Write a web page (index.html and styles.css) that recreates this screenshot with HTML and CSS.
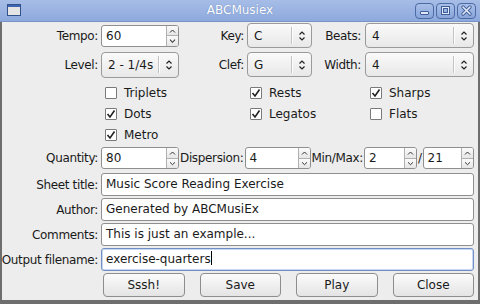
FILE: index.html
```html
<!DOCTYPE html>
<html lang="en">
<head>
  <meta charset="UTF-8" />
  <title>ABCMusiex</title>
  <link rel="stylesheet" href="styles.css">
</head>
<body>
  <div class="window">

    <!-- Title bar -->
    <div class="titlebar">
      <svg class="app-icon" width="14" height="12" viewBox="0 0 14 12">
        <rect x="0.5" y="0.5" width="13" height="11" fill="#e4e4e4" stroke="#33518a"/>
        <rect x="1" y="1" width="12" height="2" fill="#3d64b0"/>
      </svg>
      <span class="title">ABCMusiex</span>
      <div class="wm-buttons">
        <div class="wm-btn">
          <svg width="17" height="13" viewBox="0 0 17 13"><rect x="4.5" y="7.5" width="8" height="3" rx="0.5" fill="#e3eaf7" stroke="#3f5d98"/></svg>
        </div>
        <div class="wm-btn">
          <svg width="17" height="13" viewBox="0 0 17 13"><rect x="4.5" y="2.5" width="8" height="8" fill="none" stroke="#3f5d98" stroke-width="1"/><rect x="5.5" y="3.5" width="6" height="6" fill="none" stroke="#e3eaf7" stroke-width="1"/><rect x="6.5" y="4.5" width="4" height="4" fill="none" stroke="#3f5d98"/></svg>
        </div>
        <div class="wm-btn">
          <svg width="17" height="13" viewBox="0 0 17 13"><path d="M5 3 L12 10 M12 3 L5 10" stroke="#3f5d98" stroke-width="3.4" stroke-linecap="round"/><path d="M5 3 L12 10 M12 3 L5 10" stroke="#e3eaf7" stroke-width="1.6" stroke-linecap="round"/></svg>
        </div>
      </div>
    </div>

    <!-- Dialog body -->
    <div class="content">

      <div class="row row-top first">
        <span class="lbl">Tempo:</span>
        <div class="spin w-tempo"><span class="val">60</span><span class="arrows"><span class="up"></span><span class="down"></span></span></div>
        <span class="lbl lbl-key">Key:</span>
        <div class="combo w-key"><span class="val">C</span><span class="sep"></span><span class="chev"></span></div>
        <span class="lbl lbl-beats">Beats:</span>
        <div class="combo w-beats"><span class="val">4</span><span class="sep"></span><span class="chev"></span></div>
      </div>

      <div class="row row-top">
        <span class="lbl">Level:</span>
        <div class="combo w-tempo"><span class="val">2 - 1/4s</span><span class="sep"></span><span class="chev"></span></div>
        <span class="lbl lbl-key">Clef:</span>
        <div class="combo w-key"><span class="val">G</span><span class="sep"></span><span class="chev"></span></div>
        <span class="lbl lbl-beats">Width:</span>
        <div class="combo w-beats"><span class="val">4</span><span class="sep"></span><span class="chev"></span></div>
      </div>

      <div class="checks">
        <label class="check"><span class="box"></span>Triplets</label>
        <label class="check"><span class="box on"></span>Rests</label>
        <label class="check"><span class="box on"></span>Sharps</label>
        <label class="check"><span class="box on"></span>Dots</label>
        <label class="check"><span class="box on"></span>Legatos</label>
        <label class="check"><span class="box"></span>Flats</label>
        <label class="check"><span class="box on"></span>Metro</label>
      </div>

      <div class="row row-qty">
        <span class="lbl">Quantity:</span>
        <div class="spin w-tempo"><span class="val">80</span><span class="arrows"><span class="up"></span><span class="down"></span></span></div>
        <span class="txt">Dispersion:</span>
        <div class="spin w-disp"><span class="val">4</span><span class="arrows"><span class="up"></span><span class="down"></span></span></div>
        <span class="txt">Min/Max:</span>
        <div class="spin w-min"><span class="val">2</span><span class="arrows"><span class="up"></span><span class="down"></span></span></div>
        <span class="txt">/</span>
        <div class="spin w-max"><span class="val">21</span><span class="arrows"><span class="up"></span><span class="down"></span></span></div>
      </div>

      <div class="row row-text first-text">
        <span class="lbl">Sheet title:</span>
        <div class="input">Music Score Reading Exercise</div>
      </div>
      <div class="row row-text">
        <span class="lbl">Author:</span>
        <div class="input">Generated by ABCMusiEx</div>
      </div>
      <div class="row row-text">
        <span class="lbl">Comments:</span>
        <div class="input">This is just an example...</div>
      </div>
      <div class="row row-text">
        <span class="lbl">Output filename:</span>
        <div class="input focused">exercise-quarters<span class="caret"></span></div>
      </div>

      <div class="buttons">
        <div class="btn">Sssh!</div>
        <div class="btn">Save</div>
        <div class="btn">Play</div>
        <div class="btn">Close</div>
      </div>

    </div>
  </div>
</body>
</html>
```

FILE: styles.css
```css
/* ABCMusiex dialog */
body {
  margin: 0;
  font-family: "DejaVu Sans", sans-serif;
  font-size: 12px;
  color: #1a1a1a;
  background: #6e6e6e;
}

.window {
  width: 480px;
  height: 304px;
  display: flex;
  flex-direction: column;
  box-sizing: border-box;
  overflow: hidden;
}

/* Title bar */
.titlebar {
  height: 22px;
  flex: none;
  display: flex;
  align-items: center;
  position: relative;
  background: linear-gradient(#a6bde7, #8ea9dd);
  border-bottom: 1px solid #7893c6;
  box-sizing: border-box;
  padding-left: 7px;
}

.app-icon {
  display: block;
  margin-top: -1px;
}

.title {
  position: absolute;
  left: 0;
  right: 0;
  text-align: center;
  color: #fff;
  font-size: 12px;
  text-shadow: 0 0 1px #5d78ad;
  top: 3px;
}

.wm-buttons {
  margin-left: auto;
  display: flex;
  gap: 2px;
  margin-right: 4px;
  position: relative;
}

.wm-btn {
  width: 17px;
  height: 14px;
  border: 1px solid #4c6aa3;
  border-radius: 4px;
  background: linear-gradient(#a8bfe8, #88a5da);
  display: flex;
}

/* Body */
.content {
  flex: 1;
  background: #ededed;
  border-left: 2px solid #6e6e6e;
  border-right: 2px solid #6e6e6e;
  border-bottom: 4px solid #6e6e6e;
  padding: 0 4px 0 0;
  display: flex;
  flex-direction: column;
}

.row {
  display: flex;
  align-items: center;
}

.row-top {
  height: 25px;
  margin-top: 4px;
}

.row-top.first {
  margin-top: 1px;
}

.lbl {
  width: 96px;
  flex: none;
  display: flex;
  justify-content: flex-end;
  margin-right: 3px;
  white-space: nowrap;
  letter-spacing: -0.35px;
}

.lbl-key {
  width: 65px;
  margin-right: 3px;
}

.lbl-beats {
  width: 49px;
  margin-right: 4px;
}

.txt {
  flex: none;
  white-space: nowrap;
  letter-spacing: -0.35px;
  margin: 0 1px;
}

/* Spin boxes */
.spin {
  height: 22px;
  box-sizing: border-box;
  display: flex;
  background: #fff;
  border: 1px solid #8f8f8f;
  border-radius: 3px;
  flex: none;
}

.spin .val {
  flex: 1;
  padding-left: 4px;
  line-height: 20px;
}

.arrows {
  width: 11px;
  display: flex;
  flex-direction: column;
  border-left: 1px solid #b0b0b0;
}

.arrows span {
  flex: 1;
  background: linear-gradient(#fbfbfb, #e6e6e6);
  background-repeat: no-repeat;
}

.arrows .up {
  border-bottom: 1px solid #b0b0b0;
  border-top-right-radius: 2px;
  background-image: url("data:image/svg+xml,%3Csvg xmlns='http://www.w3.org/2000/svg' width='11' height='10'%3E%3Cpath d='M3 6.5 L5.5 4 L8 6.5' fill='none' stroke='%23333' stroke-width='1'/%3E%3C/svg%3E"), linear-gradient(#fbfbfb, #e6e6e6);
}

.arrows .down {
  border-bottom-right-radius: 2px;
  background-image: url("data:image/svg+xml,%3Csvg xmlns='http://www.w3.org/2000/svg' width='11' height='10'%3E%3Cpath d='M3 3.5 L5.5 6 L8 3.5' fill='none' stroke='%23333' stroke-width='1'/%3E%3C/svg%3E"), linear-gradient(#fbfbfb, #e6e6e6);
}

.w-tempo { width: 78px; }
.w-disp { width: 66px; }
.w-min { width: 53px; }
.w-max { flex: 1; }

/* Combo boxes */
.combo {
  height: 25px;
  box-sizing: border-box;
  display: flex;
  align-items: center;
  background: linear-gradient(#fafafa, #e8e8e8);
  border: 1px solid #9a9a9a;
  border-radius: 4px;
  flex: none;
}

.combo.w-tempo { height: 26px; }

.combo .val {
  flex: 1;
  padding-left: 6px;
  padding-top: 1px;
}

.combo .sep {
  width: 1px;
  height: 17px;
  background: #c3c3c3;
  border-right: 1px solid #fdfdfd;
}

.combo .chev {
  width: 18px;
  height: 12px;
  background: url("data:image/svg+xml,%3Csvg xmlns='http://www.w3.org/2000/svg' width='18' height='12'%3E%3Cpath d='M6.5 4.5 L9 2 L11.5 4.5 M6.5 7.5 L9 10 L11.5 7.5' fill='none' stroke='%23222' stroke-width='1.2'/%3E%3C/svg%3E") no-repeat;
}

.w-key { width: 65px; }
.w-beats { width: 109px; }

/* Check boxes */
.checks {
  margin-top: 5px;
  padding-left: 103px;
  display: grid;
  grid-template-columns: 145px 120px 1fr;
  grid-auto-rows: 21px;
}

.check {
  display: flex;
  align-items: center;
  gap: 7px;
}

.box {
  width: 10px;
  height: 10px;
  border: 1px solid #7a7a7a;
  border-radius: 1px;
  background: #fff;
}

.box.on {
  background: #fff url("data:image/svg+xml,%3Csvg xmlns='http://www.w3.org/2000/svg' width='10' height='10'%3E%3Cpath d='M1.5 5 L4 8 L8.5 1.5' fill='none' stroke='%23222' stroke-width='1.6'/%3E%3C/svg%3E") no-repeat;
}

.row-qty {
  height: 24px;
  margin-top: 1px;
}

/* Text inputs */
.row-text {
  height: 23px;
  margin-top: 2px;
}

.row-text.first-text {
  margin-top: 3px;
}

.input {
  flex: 1;
  height: 23px;
  box-sizing: border-box;
  background: #fff;
  border: 1px solid #8f8f8f;
  border-radius: 3px;
  padding-left: 4px;
  line-height: 21px;
  white-space: nowrap;
}

.input.focused {
  border-color: #6f8fc6;
  box-shadow: inset 0 0 0 1px #c9d8f0;
}

.caret {
  display: inline-block;
  width: 1px;
  height: 14px;
  background: #000;
  vertical-align: -2px;
}

/* Buttons */
.buttons {
  display: flex;
  gap: 15px;
  margin-top: 2px;
  padding-left: 101px;
}

.btn {
  flex: 1;
  height: 24px;
  box-sizing: border-box;
  border: 1px solid #8d8d8d;
  border-radius: 4px;
  background: linear-gradient(#fbfbfb, #e4e4e4);
  text-align: center;
  line-height: 22px;
}
```
